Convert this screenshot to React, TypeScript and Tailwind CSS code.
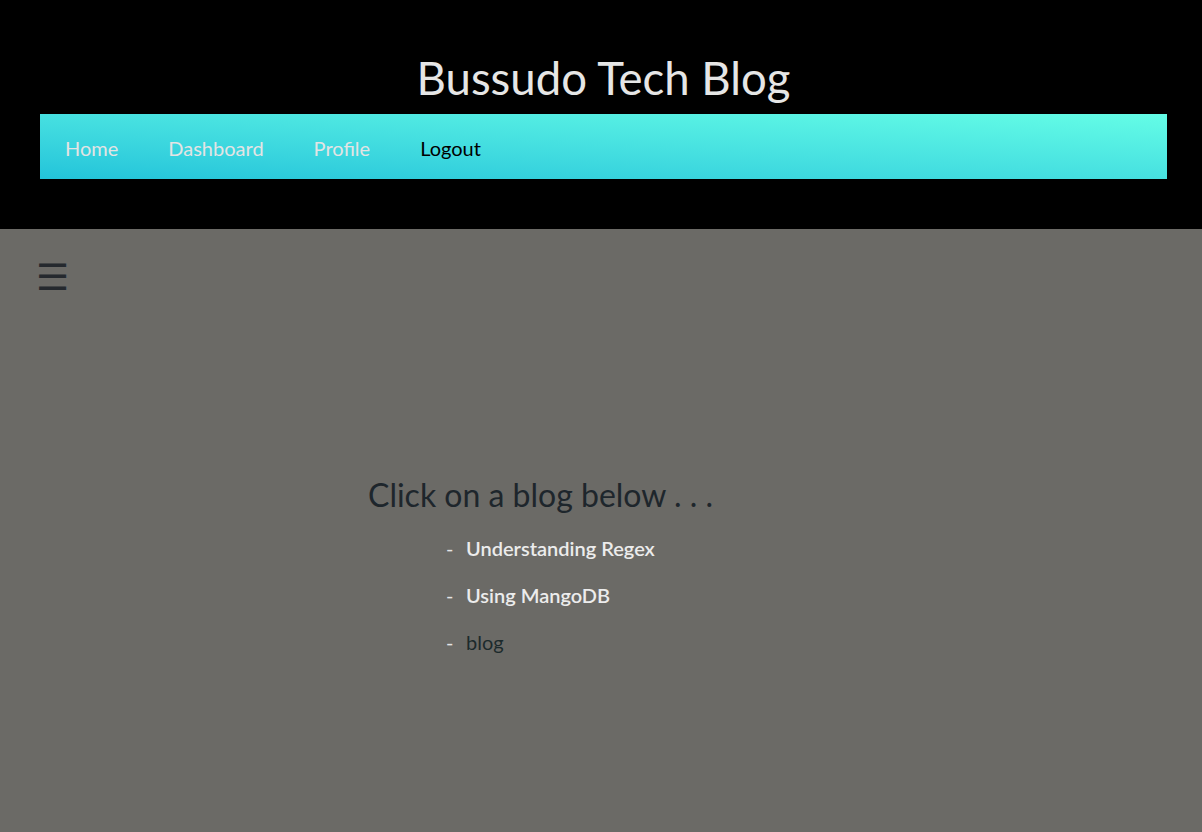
import React from "react";

const links = [
  { label: "Home", active: false },
  { label: "Dashboard", active: false },
  { label: "Profile", active: false },
  { label: "Logout", active: true },
];

const blogs = [
  { title: "Understanding Regex", visited: true },
  { title: "Using MangoDB", visited: true },
  { title: "blog", visited: false },
];

const App = () => {
  return (
    <div className="min-h-[832px] bg-[#6b6a66] font-['Lato','Liberation_Sans',sans-serif]">
      {/* Header */}
      <header className="bg-black pl-[40px] pr-[35px] pt-[50px] pb-[50px]">
        <h1 className="text-center text-[45.5px] leading-[56px] text-[#e6e6e6] mb-[8px]">
          Bussudo Tech Blog
        </h1>
        <nav className="h-[65px] flex items-center gap-[50px] px-[25px] pt-[3px] bg-linear-to-tr from-[#22c4da] to-[#64fde6]">
          {links.map((l) => (
            <a
              key={l.label}
              href="#"
              className={`text-[20px] ${l.active ? "text-black" : "text-[#e4e4e4]"}`}
            >
              {l.label}
            </a>
          ))}
        </nav>
      </header>

      {/* Menu toggle */}
      <div className="px-[36px] pt-[26px]">
        <span className="block text-[37px] leading-[42px] text-[#25292e]">☰</span>
      </div>

      {/* Blog list */}
      <main className="pl-[368px] pt-[178px]">
        <h2 className="text-[32px] leading-[40px] text-[#1e262c]">Click on a blog below . . .</h2>
        <ul className="mt-[19px] pl-[78px] flex flex-col gap-[19px]">
          {blogs.map((b) => (
            <li key={b.title} className="flex items-center text-[20px] leading-[28px]">
              <span className="text-[#e4e4e4] w-[20px]">-</span>
              <a
                href="#"
                className={b.visited ? "text-[#ececec] font-semibold" : "text-[#1c2a2c]"}
              >
                {b.title}
              </a>
            </li>
          ))}
        </ul>
      </main>
    </div>
  );
};

export default App;
